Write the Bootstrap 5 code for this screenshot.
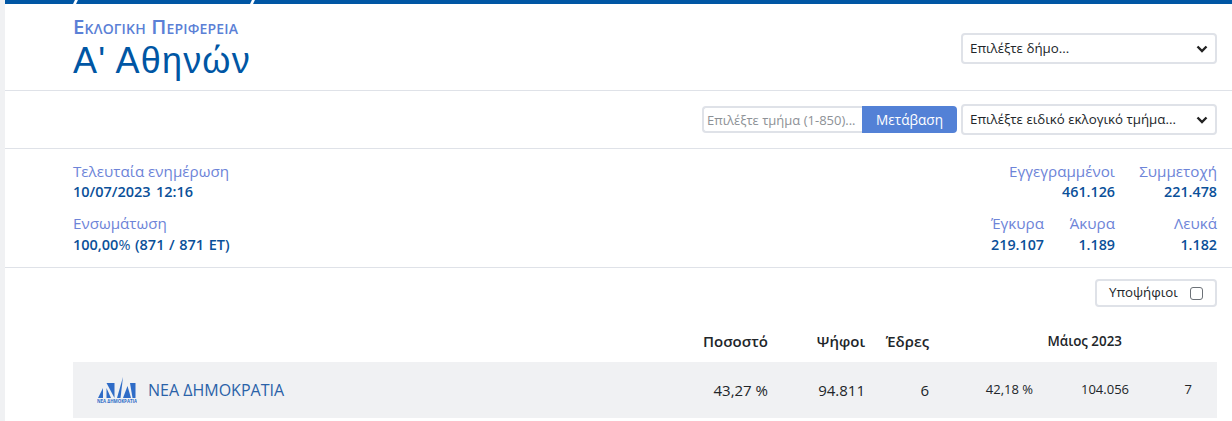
<!DOCTYPE html>
<html lang="el">
<head>
<meta charset="utf-8">
<title>Α' Αθηνών</title>
<link href="https://cdn.jsdelivr.net/npm/bootstrap@5.3.0/dist/css/bootstrap.min.css" rel="stylesheet">
<style>
html,body{height:421px;overflow:hidden}
body{font-family:"Open Sans","Noto Sans",sans-serif;background:#f0f1f3;color:#212529}
.shell{margin-left:5px;height:421px;background:#fff}
.topstripe{height:4px;background:#0056a4;display:flex}
.topstripe i{display:block;width:3px;background:#fff;transform:skewX(-25deg)}
.topstripe .s1{margin-left:69px}
.topstripe .s2{margin-left:174px}
.band{padding:0 15px 0 68px;border-bottom:1px solid #dfe2e8}
.band-head{height:87px;padding-top:12px}
.band-tools{height:58px}
.band-info{height:119px;padding-top:12px}
.eyebrow{font-variant:small-caps;font-size:20.5px;line-height:21px;color:#5b80d6;font-weight:600;margin-bottom:3px;letter-spacing:.17px}
.region{font-family:"Liberation Sans",sans-serif;font-size:36px;line-height:41px;color:#0056a4;letter-spacing:1.2px;margin:0;font-weight:400}
.pick{width:256px;height:31px;font-size:13.3px;border:2px solid #dfe2e8;border-radius:4px;padding:2px 30px 2px 7px;color:#212529;font-family:inherit;background-size:12px 10px;background-position:right 7px center;background-image:url("data:image/svg+xml,%3csvg xmlns='http://www.w3.org/2000/svg' viewBox='0 0 12 10'%3e%3cpath fill='none' stroke='%23222' stroke-width='2.4' d='M1.5 2.5 6 7l4.500-4.500'/%3e%3c/svg%3e")}
.band-head .pick{margin-top:17px}
.jump{width:255px;margin-right:4px}
.jump .form-control{height:27px;font-size:13px;border:2px solid #dfe2e8;border-right:0;padding:1px 3px 0;border-radius:4px 0 0 4px;min-width:0}
.jump .form-control::placeholder{color:#8d9196}
.jump .btn{height:27px;width:95px;flex:none;font-size:13.6px;line-height:1;padding:0;background:#5381d6;border:0;border-radius:0 4px 4px 0;color:#fff}
.lbl{font-size:15.2px;line-height:20px;color:#6d84d8}
.val{font-size:14.5px;line-height:20px;color:#0a5099;font-weight:600;margin-top:1px}
.infoline + .infoline .val{margin-top:2px}
.val span{font-weight:400}
.wide{word-spacing:1.5px}
.wide2{word-spacing:.8px}
.stat .val{font-size:14.3px}
.infoline{height:52px}
.stat{text-align:right}
.w-a{width:71px}.w-b{width:71px}.w-c{width:102px}
.w-ab{width:142px}
.togglebar{padding:11px 15px 0 68px;height:53px}
.candbtn{width:122px;height:28px;border:2px solid #dfe2e8;border-radius:4px;font-size:13.3px;padding:0 12px;margin:0}
.candbtn .form-check-input{width:13px;height:13px;margin:0;border-color:#6c7177;border-radius:3px;float:none}
.results{margin:0 15px 0 68px}
.gridrow{display:grid;grid-template-columns:575px 120px 97px 64px 104px 96px 63px 1fr;align-items:center}
.gridrow>div{text-align:right}
.heads{height:41px;font-size:15px;font-weight:600}
.heads>.prev{grid-column:5 / -1;font-size:13.4px;padding-right:95px}
.partyrow{height:56px;background:#f0f1f3;font-size:15px}
.gridrow>.party{color:#2a62a8;font-size:16px;padding-left:24px;gap:11px;text-align:left}
.sm{font-size:13px}
.logo{width:40px;height:30px;display:block;flex:none}
.logotxt{font-size:4.300px;font-weight:700;fill:#2f6cc7}
</style>
</head>
<body>
<div class="shell">
  <div class="topstripe"><i class="s1"></i><i class="s2"></i></div>
  <div class="band band-head d-flex justify-content-between align-items-start">
    <div>
      <div class="eyebrow">Εκλογική Περιφέρεια</div>
      <h1 class="region">Α' Αθηνών</h1>
    </div>
    <select class="form-select pick"><option>Επιλέξτε δήμο...</option></select>
  </div>
  <div class="band band-tools d-flex justify-content-end align-items-center">
    <div class="input-group jump flex-nowrap">
      <input class="form-control" type="text" placeholder="Επιλέξτε τμήμα (1-850)...">
      <button class="btn" type="button">Μετάβαση</button>
    </div>
    <select class="form-select pick"><option>Επιλέξτε ειδικό εκλογικό τμήμα...</option></select>
  </div>
  <div class="band band-info">
    <div class="d-flex justify-content-between infoline">
      <div><div class="lbl">Τελευταία ενημέρωση</div><div class="val wide">10/07/2023 12:16</div></div>
      <div class="d-flex">
        <div class="stat w-ab"><div class="lbl">Εγγεγραμμένοι</div><div class="val">461.126</div></div>
        <div class="stat w-c"><div class="lbl">Συμμετοχή</div><div class="val">221.478</div></div>
      </div>
    </div>
    <div class="d-flex justify-content-between infoline">
      <div><div class="lbl">Ενσωμάτωση</div><div class="val wide2">100,00<span>%</span> (871 / 871 ΕΤ)</div></div>
      <div class="d-flex">
        <div class="stat w-a"><div class="lbl">Έγκυρα</div><div class="val">219.107</div></div>
        <div class="stat w-b"><div class="lbl">Άκυρα</div><div class="val">1.189</div></div>
        <div class="stat w-c"><div class="lbl">Λευκά</div><div class="val">1.182</div></div>
      </div>
    </div>
  </div>
  <div class="togglebar d-flex justify-content-end">
    <label class="candbtn d-flex align-items-center justify-content-between">Υποψήφιοι <input class="form-check-input" type="checkbox"></label>
  </div>
  <div class="results">
    <div class="gridrow heads">
      <div></div><div>Ποσοστό</div><div>Ψήφοι</div><div>Έδρες</div>
      <div class="prev">Μάιος 2023</div>
    </div>
    <div class="gridrow partyrow">
      <div class="party d-flex align-items-center">
        <svg class="logo" viewBox="0 0 40 30" role="img" aria-label="Νέα Δημοκρατία">
          <g fill="#2f6cc7">
            <path d="M1 23 6 13V23Z"/>
            <path d="M9.500 8H17.500V23Z"/>
            <path d="M9.500 13 14 23H9.500Z"/>
            <path d="M26 2 20 23H23.500Z"/>
            <path d="M33 8H38.500V23H35.500Z"/>
            <path d="M30.500 11 34 23H26Z"/>
          </g>
          <text class="logotxt" x="0" y="28" textLength="40" lengthAdjust="spacingAndGlyphs">ΝΕΑ ΔΗΜΟΚΡΑΤΙΑ</text>
        </svg>
        <span>ΝΕΑ ΔΗΜΟΚΡΑΤΙΑ</span>
      </div>
      <div>43,27 %</div><div>94.811</div><div>6</div>
      <div class="sm">42,18 %</div><div class="sm">104.056</div><div class="sm">7</div>
    </div>
  </div>
</div>
</body>
</html>
